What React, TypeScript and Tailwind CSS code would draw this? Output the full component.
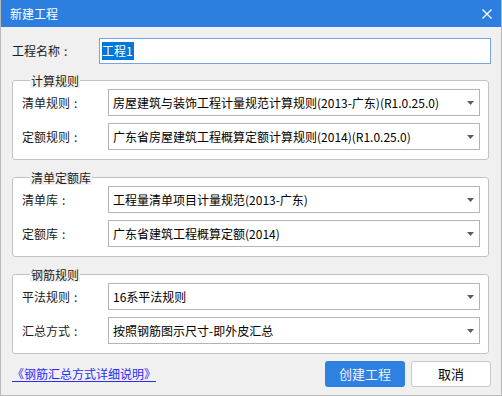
const FONT = '"Noto Sans CJK SC", "Microsoft YaHei", "Noto Sans", sans-serif';

function Arrow() {
  return (
    <svg width="7" height="4" viewBox="0 0 7 4" className="shrink-0">
      <path d="M0 0H7L3.5 4Z" fill="#5c5c5c" />
    </svg>
  );
}

function Label({ text, width }: { text: string; width: string }) {
  return (
    <div className={`${width} shrink-0 text-[12px] text-[#1b1b1b]`}>
      {text}
      <span className="ml-[4px]">:</span>
    </div>
  );
}

function SelectRow({ label, value }: { label: string; value: string }) {
  return (
    <div className="flex items-center">
      <div className="w-[86px] shrink-0 text-[12px] text-[#1b1b1b]">
        {label}
        <span className="ml-[4px]">:</span>
      </div>
      <div className="flex h-[27px] w-[372px] items-center justify-between border border-[#b4b4b4] bg-white pl-[4px] pr-[5px]">
        <span className="text-[12px] leading-[16px] text-black">{value}</span>
        <Arrow />
      </div>
    </div>
  );
}

function Group({ title, rows }: { title: string; rows: { label: string; value: string }[] }) {
  return (
    <fieldset className="w-[477px] rounded-[3px] border border-[#c2c2c2] bg-white pb-[9px] pl-[9px] pt-[1px]">
      <legend className="ml-[8px] bg-[#f0f0f0] px-[1px] text-[12px] leading-[15px] text-[#1b1b1b]">{title}</legend>
      <div className="flex flex-col gap-[7px]">
        {rows.map((r) => (
          <SelectRow key={r.label} label={r.label} value={r.value} />
        ))}
      </div>
    </fieldset>
  );
}

export default function App() {
  return (
    <div
      className="flex h-[396px] w-[502px] flex-col border-x border-b border-[#b9b9b9] bg-[#f0f0f0]"
      style={{ fontFamily: FONT }}
    >
      {/* Title bar */}
      <div className="flex h-[27px] shrink-0 items-center justify-between bg-[#2c7fdf] pl-[9px] pr-[8px]">
        <span className="text-[12px] text-white">新建工程</span>
        <svg width="10" height="10" viewBox="0 0 10 10" className="mr-[1px]">
          <path d="M0.5 0.5L9.5 9.5M9.5 0.5L0.5 9.5" stroke="#ffffff" strokeWidth="1.3" />
        </svg>
      </div>

      <div className="flex flex-col pl-[11px] pt-[11px]">
        {/* Project name */}
        <div className="flex items-center">
          <Label text="工程名称" width="w-[87px]" />
          <div className="flex h-[26px] w-[392px] items-center border border-[#7ba2e3] bg-white pl-[2px]">
            <span className="bg-[#0078d7] pr-[1px] text-[12px] leading-[18px] text-white">工程1</span>
          </div>
        </div>

        <div className="mt-[9px]">
          <Group
            title="计算规则"
            rows={[
              { label: '清单规则', value: '房屋建筑与装饰工程计量规范计算规则(2013-广东)(R1.0.25.0)' },
              { label: '定额规则', value: '广东省房屋建筑工程概算定额计算规则(2014)(R1.0.25.0)' },
            ]}
          />
        </div>
        <div className="mt-[10px]">
          <Group
            title="清单定额库"
            rows={[
              { label: '清单库', value: '工程量清单项目计量规范(2013-广东)' },
              { label: '定额库', value: '广东省建筑工程概算定额(2014)' },
            ]}
          />
        </div>
        <div className="mt-[10px]">
          <Group
            title="钢筋规则"
            rows={[
              { label: '平法规则', value: '16系平法规则' },
              { label: '汇总方式', value: '按照钢筋图示尺寸-即外皮汇总' },
            ]}
          />
        </div>

        {/* Footer */}
        <div className="mt-[7px] flex w-[479px] items-center justify-between">
          <a className="text-[12px] text-[#2a2aff] underline underline-offset-2">《钢筋汇总方式详细说明》</a>
          <div className="flex gap-[6px]">
            <button className="h-[26px] w-[80px] rounded-[3px] bg-[#2e80e1] text-[13px] text-[#eef4ff]">创建工程</button>
            <button className="h-[26px] w-[80px] rounded-[3px] border border-[#c9c9c9] bg-white text-[13px] text-black">取消</button>
          </div>
        </div>
      </div>
    </div>
  );
}
